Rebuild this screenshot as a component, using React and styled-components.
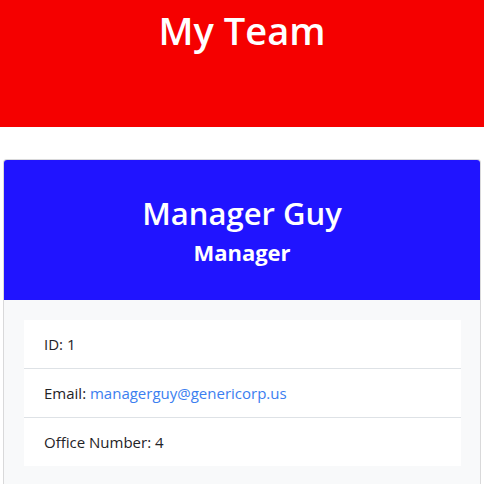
import React from "react";
import styled, { createGlobalStyle } from "styled-components";

const Global = createGlobalStyle`
  html, body { margin: 0; padding: 0; background: #fff; }
  body {
    font-family: "Open Sans", "Noto Sans", sans-serif;
    color: #212529;
    font-size: 16px;
    line-height: 1.5;
  }
`;

const Banner = styled.header`
  background: #f50000;
  height: 127px;
  display: flex;
  justify-content: center;
  align-items: flex-start;
`;

const BannerTitle = styled.h1`
  margin: 8px 0 0;
  color: #fff;
  font-size: 38px;
  font-weight: 600;
  line-height: 1.2;
`;

const Main = styled.main`
  padding: 32px 3px 0;
`;

const Card = styled.section`
  border: 1px solid rgba(0, 0, 0, 0.125);
  border-radius: 4px;
  overflow: hidden;
  background: #f8f9fa;
`;

const CardHeader = styled.div`
  background: #2014ff;
  color: #fff;
  height: 140px;
  display: flex;
  flex-direction: column;
  align-items: center;
  justify-content: center;
  padding-top: 0;
  box-sizing: border-box;
`;

const Name = styled.h2`
  margin: 0;
  font-size: 31px;
  font-weight: 600;
  line-height: 1.2;
`;

const Role = styled.h3`
  margin: 7px 0 0;
  font-size: 22px;
  font-weight: 700;
  line-height: 1.2;
`;

const CardBody = styled.div`
  padding: 20px 19px 40px 20px;
`;

const List = styled.ul`
  list-style: none;
  margin: 0;
  padding: 0;
  background: #fff;
`;

const Item = styled.li`
  padding: 12px 20px;
  font-size: 15px;
  line-height: 24px;
  color: #1f2327;
  & + & { border-top: 1px solid #dee2e6; }
`;

const Link = styled.a`
  color: #3b7ef0;
  text-decoration: none;
`;

export default function App() {
  return (
    <>
      <Global />
      <Banner>
        <BannerTitle>My Team</BannerTitle>
      </Banner>
      <Main>
        <Card>
          <CardHeader>
            <Name>Manager Guy</Name>
            <Role>Manager</Role>
          </CardHeader>
          <CardBody>
            <List>
              <Item>ID: 1</Item>
              <Item>
                Email: <Link href="mailto:managerguy@genericorp.us">managerguy@genericorp.us</Link>
              </Item>
              <Item>Office Number: 4</Item>
            </List>
          </CardBody>
        </Card>
      </Main>
    </>
  );
}
